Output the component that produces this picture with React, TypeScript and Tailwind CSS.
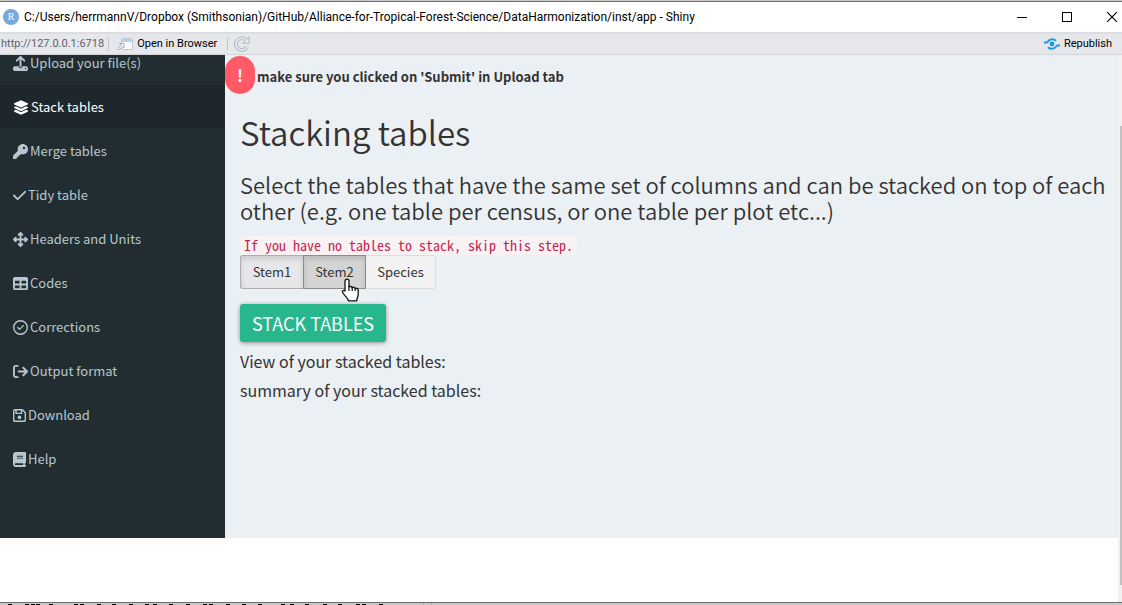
import {
  FaUpload,
  FaLayerGroup,
  FaKey,
  FaCheck,
  FaArrowsUpDownLeftRight,
  FaTable,
  FaRegCircleCheck,
  FaArrowRightFromBracket,
  FaRegFloppyDisk,
  FaBook,
} from "react-icons/fa6";
import type { IconType } from "react-icons";

type NavItem = { label: string; icon: IconType; size: string; active?: boolean };

const narrow = "h-[15px] w-[13px]";
const regular = "h-[15px] w-[15px]";
const wide = "h-[15px] w-4";

const navItems: NavItem[] = [
  { label: "Upload your file(s)", icon: FaUpload, size: regular },
  { label: "Stack tables", icon: FaLayerGroup, size: wide, active: true },
  { label: "Merge tables", icon: FaKey, size: regular },
  { label: "Tidy table", icon: FaCheck, size: narrow },
  { label: "Headers and Units", icon: FaArrowsUpDownLeftRight, size: regular },
  { label: "Codes", icon: FaTable, size: regular },
  { label: "Corrections", icon: FaRegCircleCheck, size: regular },
  { label: "Output format", icon: FaArrowRightFromBracket, size: regular },
  { label: "Download", icon: FaRegFloppyDisk, size: narrow },
  { label: "Help", icon: FaBook, size: narrow },
];

function TitleBar() {
  return (
    <header className="flex h-8 shrink-0 items-center justify-between border-t border-[#c8c8c8] bg-white text-black">
      <div className="flex h-full grow items-center gap-[5px] border-t border-[#6e6e6e] pl-[3px]">
        <span className="flex size-4 items-center justify-center rounded-full bg-[#75aadb] font-['Liberation_Serif',serif] text-[10px] leading-none text-white">
          R
        </span>
        <h1 className="text-xs whitespace-nowrap">
          C:/Users/herrmannV/Dropbox (Smithsonian)/GitHub/Alliance-for-Tropical-Forest-Science/DataHarmonization/inst/app - Shiny
        </h1>
      </div>
      <div className="flex h-full items-center gap-[35px] border-t border-[#6e6e6e] pr-[5px]">
        <button aria-label="Minimize">
          <svg className="block size-[10px]" viewBox="0 0 10 10" shapeRendering="crispEdges">
            <path d="M0 5.5H10" stroke="#000" />
          </svg>
        </button>
        <button aria-label="Maximize">
          <svg className="block size-[10px]" viewBox="0 0 10 10" shapeRendering="crispEdges">
            <path d="M.5 .5h9v9h-9z" fill="none" stroke="#000" />
          </svg>
        </button>
        <button aria-label="Close">
          <svg className="block size-[10px]" viewBox="0 0 10 10">
            <path d="M0 0L10 10M10 0L0 10" stroke="#000" strokeWidth="1.1" />
          </svg>
        </button>
      </div>
    </header>
  );
}

function Toolbar() {
  return (
    <div className="flex h-[23px] shrink-0 items-center border-t-2 border-b border-t-[#dcdde2] border-b-[#d3d5d9] bg-[#e6e7eb] text-[11px] text-black">
      <span className="pl-px text-[#5f6265]">http://127.0.0.1:6718</span>
      <span className="ml-1 h-3.5 w-px bg-[#c4c6ca]" />
      <button className="ml-2 flex items-center gap-1">
        <svg className="h-3 w-4" viewBox="0 0 16 12">
          <rect x="4.5" y=".5" width="11" height="11" rx="1.5" fill="#f8fafb" stroke="#b9c8d4" />
          <path d="M5 1h10v3H5z" fill="#b4d7ed" />
          <path d="M.5 10.5L4 7 2.5 5.5H7v4.500L5.500 8.500 2 12z" fill="#eef1f3" stroke="#98a3ac" strokeWidth=".8" />
        </svg>
        Open in Browser
      </button>
      <span className="ml-[10px] h-3.5 w-px bg-[#c4c6ca]" />
      <button aria-label="Reload" className="ml-1.5">
        <svg className="size-4" viewBox="0 0 16 16" fill="none">
          <path d="M13 10.500A5.800 5.800 0 1 1 12 4.200" stroke="#a9b4be" strokeWidth="3.600" />
          <path d="M15 .8V7.200H8.600z" fill="#e4ecf2" stroke="#a9b4be" strokeWidth=".9" />
          <path d="M13 10.500A5.800 5.800 0 1 1 12 4.200" stroke="#dfe9f1" strokeWidth="2" />
        </svg>
      </button>
      <button className="ml-auto flex items-center gap-1 pr-[10px]">
        <svg className="h-3 w-4" viewBox="0 0 16 12" fill="none" stroke="#1a9be6" strokeWidth="2">
          <circle cx="8" cy="6" r="2.400" fill="#1a9be6" stroke="none" />
          <path d="M0 4.600H2.500C4 4.600 4 1.200 8 1.200c1.800 0 3 .6 4 1.600" />
          <path d="M16 7.400h-2.500C12 7.400 12 10.800 8 10.800c-1.800 0-3-.6-4-1.600" />
        </svg>
        Republish
      </button>
    </div>
  );
}

function Sidebar() {
  return (
    <nav className="w-[225px] shrink-0 overflow-hidden bg-[#222d32] text-[13px]">
      <ul className="-mt-3.5">
        {navItems.map(({ label, icon: Icon, size, active }) => (
          <li key={label}>
            <a
              href="#"
              className={
                active
                  ? "flex h-11 items-center gap-0.5 bg-[#1e282c] pl-[13px] text-white"
                  : "flex h-11 items-center gap-0.5 pl-[13px] text-[#b8c7ce]"
              }
            >
              <Icon className={size} />
              {label}
            </a>
          </li>
        ))}
      </ul>
    </nav>
  );
}

function HandCursor() {
  return (
    <svg className="pointer-events-none absolute top-[22px] left-[37px] h-6 w-[19px]" viewBox="0 0 19 24">
      <path
        d="M6 1.200c1.200 0 2 .8 2 2V9c.3-.8 3-.8 3.200.8.500-1 2.800-.6 3 .8.600-.8 3-.4 3 1.400v4.500c0 2-1.200 3-1.500 6.300H7.500C7 20 3 17.500 1.600 14.300c-.8-1.600 1-2.600 2.400-1.200V3.200c0-1.200.8-2 2-2z"
        fill="#fff"
        stroke="#111"
        strokeWidth="1.300"
        strokeLinejoin="round"
      />
      <path d="M8 8.500V13M11.200 9.500V13M14.200 10.500V13" stroke="#111" strokeWidth="1.200" />
    </svg>
  );
}

function TablePicker() {
  return (
    <div role="group" aria-label="Tables to stack" className="flex h-[34px] text-[13px] text-[#333]">
      <button
        aria-pressed="true"
        className="w-[63px] rounded-l-[3px] border border-r-0 border-[#adadad] bg-[#e7e7e9] shadow-[inset_0_3px_5px_rgba(0,0,0,0.125)]"
      >
        Stem1
      </button>
      <button
        aria-pressed="true"
        className="relative w-[63px] border border-[#8c8c8c] bg-[#d4d4d4] shadow-[inset_0_3px_5px_rgba(0,0,0,0.125)]"
      >
        Stem2
        <HandCursor />
      </button>
      <button aria-pressed="false" className="w-[70px] rounded-r-[3px] border border-l-0 border-[#ddd] bg-[#f2f2f2]">
        Species
      </button>
    </div>
  );
}

function Main() {
  return (
    <main className="min-w-0 grow bg-[#ebf0f4] pt-px text-[#333]">
      <div className="flex items-center gap-0.5 text-[13px] font-bold">
        <span className="flex h-[38px] w-[30px] items-center justify-center rounded-[15px] bg-[#ff5a66] text-base text-white">
          !
        </span>
        <p className="pt-1">make sure you clicked on 'Submit' in Upload tab</p>
      </div>
      <div className="flex flex-col items-start pt-[18px] pr-2 pl-[15px]">
        <h2 className="text-[33px] leading-10 font-[350]">Stacking tables</h2>
        <h3 className="mt-[19px] text-[22px] leading-[26px] font-[350]">
          Select the tables that have the same set of columns and can be stacked on top of each other (e.g. one table
          per census, or one table per plot etc...)
        </h3>
        <code className="mt-[13px] rounded-[4px] bg-[#f9f2f4] px-1 font-['Noto_Sans_Mono_CJK_SC','Liberation_Mono',monospace] text-[14px] leading-[19px] text-[#c7254e]">
          If you have no tables to stack, skip this step.
        </code>
        <TablePicker />
        <button className="mt-[15px] h-[38px] rounded-[3px] bg-[#28b78d] px-3 text-lg text-white shadow-[0_1px_4px_rgba(0,0,0,0.4)]">
          STACK TABLES
        </button>
        <p className="mt-[5px] text-base leading-[29px]">View of your stacked tables:</p>
        <p className="text-base leading-[29px]">summary of your stacked tables:</p>
      </div>
    </main>
  );
}

const fragments = [8, 25, 31, 36, 49, 74, 80, 97, 112, 129, 145, 153, 169, 186, 203, 209, 226, 242, 258, 281, 290, 305, 323, 338, 356, 362, 379];

function BackgroundEdge() {
  return (
    <div className="h-[3px] shrink-0 border-t border-[#6e6e6e] bg-[#c8c8c8]">
      <svg className="block h-0.5 w-[440px]" viewBox="0 0 440 2" shapeRendering="crispEdges">
        {fragments.map((x) => (
          <rect key={x} x={x} y="1" width="4" height="1" fill="#000" />
        ))}
        <path d="M423.500 0V2M431.500 0V2" stroke="#aaa" />
      </svg>
    </div>
  );
}

export default function App() {
  return (
    <div className="flex h-screen flex-col overflow-hidden bg-white font-['Roboto','Open_Sans',sans-serif]">
      <TitleBar />
      <Toolbar />
      <div className="flex min-h-0 grow">
        <div className="flex min-w-0 grow flex-col pb-16 font-['Noto_Sans_CJK_SC',sans-serif]">
          <div className="flex min-h-0 grow">
            <Sidebar />
            <Main />
          </div>
        </div>
        <div className="flex w-1 shrink-0 flex-col items-end bg-[#f1f1f1] pt-[71px] pb-[17px]">
          <div className="w-0.5 grow bg-[#c1c1c1]" />
        </div>
      </div>
      <BackgroundEdge />
    </div>
  );
}
